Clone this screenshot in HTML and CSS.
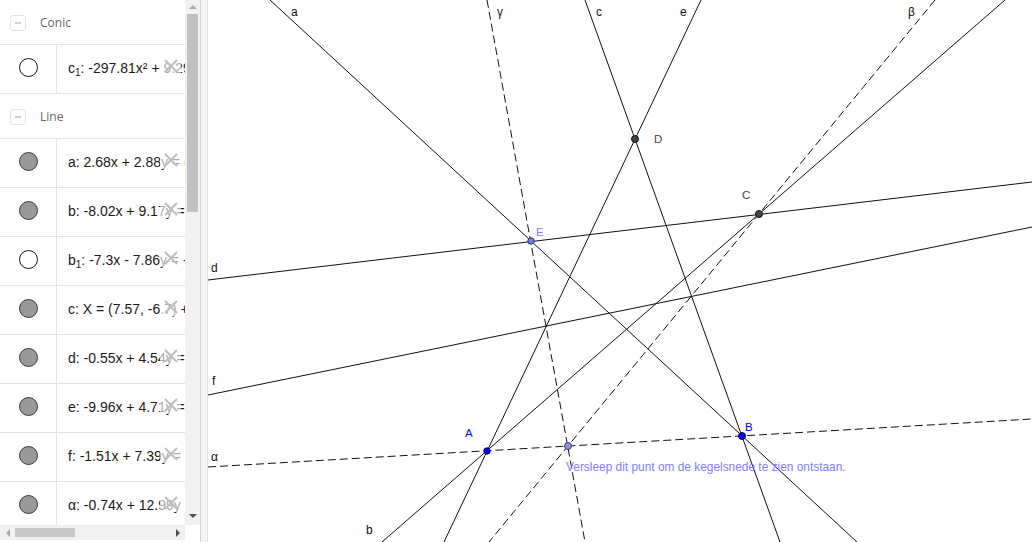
FILE: index.html
```html
<!DOCTYPE html>
<html>
<head>
<meta charset="utf-8">
<link rel="stylesheet" href="styles.css">
</head>
<body>
<div class="app">
  <div class="side">
    <div class="side-main">
      <div class="list">
        <div class="group">
          <div class="ghead"><span class="gtoggle"></span><span class="gname">Conic</span></div>
          <div class="item">
            <div class="mark"><span class="dot empty"></span></div>
            <div class="expr"><span class="txt">c<sub>1</sub>: -297.81x² + 9.29xy + 2.15y² = 1</span></div>
            <span class="del"><svg width="16" height="16" viewBox="0 0 16 16"><path d="M2 2 L14 14 M14 2 L2 14" /></svg></span>
          </div>
        </div>
        <div class="group">
          <div class="ghead"><span class="gtoggle"></span><span class="gname">Line</span></div>
          <div class="item">
            <div class="mark"><span class="dot"></span></div>
            <div class="expr"><span class="txt">a: 2.68x + 2.88y = (8.1)</span></div>
            <span class="del"><svg width="16" height="16" viewBox="0 0 16 16"><path d="M2 2 L14 14 M14 2 L2 14" /></svg></span>
          </div>
          <div class="item">
            <div class="mark"><span class="dot"></span></div>
            <div class="expr"><span class="txt">b: -8.02x + 9.17y = 12.4</span></div>
            <span class="del"><svg width="16" height="16" viewBox="0 0 16 16"><path d="M2 2 L14 14 M14 2 L2 14" /></svg></span>
          </div>
          <div class="item">
            <div class="mark"><span class="dot empty"></span></div>
            <div class="expr"><span class="txt">b<sub>1</sub>: -7.3x - 7.86y = -4.2</span></div>
            <span class="del"><svg width="16" height="16" viewBox="0 0 16 16"><path d="M2 2 L14 14 M14 2 L2 14" /></svg></span>
          </div>
          <div class="item">
            <div class="mark"><span class="dot"></span></div>
            <div class="expr"><span class="txt">c: X = (7.57, -6.7) + λ (1, 2)</span></div>
            <span class="del"><svg width="16" height="16" viewBox="0 0 16 16"><path d="M2 2 L14 14 M14 2 L2 14" /></svg></span>
          </div>
          <div class="item">
            <div class="mark"><span class="dot"></span></div>
            <div class="expr"><span class="txt">d: -0.55x + 4.54y = 3.2</span></div>
            <span class="del"><svg width="16" height="16" viewBox="0 0 16 16"><path d="M2 2 L14 14 M14 2 L2 14" /></svg></span>
          </div>
          <div class="item">
            <div class="mark"><span class="dot"></span></div>
            <div class="expr"><span class="txt">e: -9.96x + 4.71y = 5.8</span></div>
            <span class="del"><svg width="16" height="16" viewBox="0 0 16 16"><path d="M2 2 L14 14 M14 2 L2 14" /></svg></span>
          </div>
          <div class="item">
            <div class="mark"><span class="dot"></span></div>
            <div class="expr"><span class="txt">f: -1.51x + 7.39y = 2.6</span></div>
            <span class="del"><svg width="16" height="16" viewBox="0 0 16 16"><path d="M2 2 L14 14 M14 2 L2 14" /></svg></span>
          </div>
          <div class="item">
            <div class="mark"><span class="dot"></span></div>
            <div class="expr"><span class="txt">α: -0.74x + 12.99y = 1.5</span></div>
            <span class="del"><svg width="16" height="16" viewBox="0 0 16 16"><path d="M2 2 L14 14 M14 2 L2 14" /></svg></span>
          </div>
        </div>
      </div>
      <div class="vscroll">
        <div class="sb-btn"><span class="tri up"></span></div>
        <div class="vthumb"></div>
        <div class="sb-fill"></div>
        <div class="sb-btn"><span class="tri down"></span></div>
      </div>
    </div>
    <div class="hrow">
      <div class="hscroll">
        <div class="sb-hbtn"><span class="tri left"></span></div>
        <div class="hthumb"></div>
        <div class="sb-fill"></div>
        <div class="sb-hbtn"><span class="tri right"></span></div>
      </div>
      <div class="corner"></div>
    </div>
  </div>
  <div class="splitter"></div>
  <div class="canvas">
    <svg class="plot" width="824" height="542" viewBox="208 0 824 542">
      <g class="solid">
        <line x1="270" y1="0" x2="857" y2="542"/>
        <line x1="585" y1="0" x2="780" y2="542"/>
        <line x1="701" y1="0" x2="444" y2="542"/>
        <line x1="208" y1="280" x2="1032" y2="182"/>
        <line x1="208" y1="395" x2="1032" y2="227"/>
        <line x1="1005" y1="0" x2="382" y2="542"/>
      </g>
      <g class="dashed">
        <line x1="208" y1="467" x2="1032" y2="419"/>
        <line x1="935" y1="0" x2="489" y2="542"/>
        <line x1="487" y1="0" x2="585" y2="542"/>
      </g>
      <g class="lbl">
        <text x="291" y="16">a</text>
        <text x="497" y="16">γ</text>
        <text x="596" y="16">c</text>
        <text x="680" y="16">e</text>
        <text x="908" y="16">β</text>
        <text x="211" y="272">d</text>
        <text x="212" y="385">f</text>
        <text x="211" y="461">α</text>
        <text x="366" y="534">b</text>
      </g>
      <circle class="pt dark" cx="635" cy="139" r="3.5"/>
      <circle class="pt dark" cx="759" cy="214" r="3.5"/>
      <circle class="pt lav" cx="531" cy="241" r="3.2"/>
      <circle class="pt blue" cx="487" cy="451" r="3.2"/>
      <circle class="pt blue" cx="742" cy="436" r="3.5"/>
      <circle class="pt lav2" cx="568" cy="446" r="3.5"/>
      <text class="plbl dk" x="654" y="143">D</text>
      <text class="plbl dk" x="742" y="199">C</text>
      <text class="plbl lv" x="536" y="236">E</text>
      <text class="plbl bl" x="465" y="437">A</text>
      <text class="plbl bl" x="745" y="431">B</text>
      <text class="hint" x="566" y="471">Versleep dit punt om de kegelsnede te zien ontstaan.</text>
    </svg>
  </div>
</div>
</body>
</html>
```
FILE: styles.css
```css
* { box-sizing: border-box; }
html, body { margin: 0; padding: 0; background: #fff; }
body {
  width: 1032px;
  height: 542px;
  overflow: hidden;
  font-family: "Liberation Sans", Arial, sans-serif;
}
.app { display: flex; height: 542px; }

.side { width: 200px; display: flex; flex-direction: column; height: 542px; }
.side-main { display: flex; height: 525px; }
.list { width: 185px; overflow: hidden; }

.ghead {
  height: 44px;
  display: flex;
  align-items: center;
  padding-left: 10px;
  gap: 14px;
}
.gtoggle {
  width: 16px;
  height: 16px;
  border: 1px solid #e3e3e3;
  border-radius: 3px;
  position: relative;
  margin-top: 2px;
}
.gtoggle::after {
  content: "";
  position: absolute;
  left: 4px;
  right: 4px;
  top: 6px;
  height: 2px;
  background: #cfcfcf;
}
.gname {
  font-family: "Open Sans", sans-serif;
  font-size: 12px;
  color: #666;
  margin-top: 1px;
}

.item {
  position: relative;
  display: flex;
  height: 49px;
  border-top: 1px solid #e2e2e2;
}
.group .item:last-child { border-bottom: 1px solid #e2e2e2; height: 50px; }
.mark {
  width: 57px;
  border-right: 1px solid #e2e2e2;
  display: flex;
  align-items: center;
  justify-content: center;
  padding-bottom: 3px;
}
.dot {
  width: 19px;
  height: 19px;
  border-radius: 50%;
  background: #999;
  border: 1px solid #3a3a3a;
}
.dot.empty { background: #fff; border-color: #111; }
.expr {
  flex: 1;
  display: flex;
  align-items: center;
  padding-left: 11px;
  padding-bottom: 3px;
  overflow: hidden;
}
.txt {
  font-size: 14px;
  line-height: 18px;
  color: #1a1a1a;
  white-space: nowrap;
}
.txt sub { font-size: 10px; vertical-align: -3px; line-height: 0; }
.del {
  position: absolute;
  left: 160px;
  top: 12px;
  width: 21px;
  height: 18px;
  background: rgba(255, 255, 255, 0.62);
  display: flex;
  align-items: center;
  justify-content: center;
}
.del svg { display: block; }
.del path { stroke: #bdbdbd; stroke-width: 2; fill: none; }

.vscroll {
  width: 15px;
  background: #f1f1f1;
  display: flex;
  flex-direction: column;
}
.sb-btn {
  height: 14px;
  display: flex;
  align-items: center;
  justify-content: center;
}
.sb-btn:last-child { height: 18px; }
.vthumb { height: 198px; margin: 0 2px; background: #c1c1c1; }
.sb-fill { flex: 1; }

.tri { width: 0; height: 0; }
.tri.up { border-left: 4px solid transparent; border-right: 4px solid transparent; border-bottom: 4px solid #a8a8a8; }
.tri.down { border-left: 4px solid transparent; border-right: 4px solid transparent; border-top: 4px solid #505050; }
.tri.left { border-top: 4px solid transparent; border-bottom: 4px solid transparent; border-right: 4px solid #a8a8a8; }
.tri.right { border-top: 4px solid transparent; border-bottom: 4px solid transparent; border-left: 4px solid #505050; }

.hrow { display: flex; height: 15px; }
.hscroll { width: 185px; background: #f1f1f1; display: flex; }
.sb-hbtn {
  width: 15px;
  display: flex;
  align-items: center;
  justify-content: center;
}
.hthumb { width: 60px; margin: 3px 0; background: #c8c8c8; }
.corner { width: 15px; background: #fff; }

.splitter {
  width: 8px;
  height: 542px;
  background: #f5f5f5;
  border-left: 1px solid #d8d8d8;
  border-right: 1px solid #e4e4e4;
}

.canvas { flex: 1; height: 542px; overflow: hidden; }
.plot { display: block; }
.solid line { stroke: #111; stroke-width: 1; }
.dashed line { stroke: #111; stroke-width: 1; stroke-dasharray: 8 4; }
.lbl text { font-family: "Liberation Sans", Arial, sans-serif; font-size: 12px; fill: #111; }
.pt { stroke-width: 1; }
.pt.dark { fill: #444; stroke: #111; }
.pt.lav { fill: #7b7bff; stroke: #333; }
.pt.lav2 { fill: #8f8ff0; stroke: #444; }
.pt.blue { fill: #0000ff; stroke: #000060; }
.plbl { font-family: "Liberation Sans", Arial, sans-serif; font-size: 11.5px; }
.plbl.dk { fill: #444; }
.plbl.lv { fill: #7b7bff; }
.plbl.bl { fill: #0000ff; }
.hint { font-family: "Liberation Sans", Arial, sans-serif; font-size: 11.9px; fill: #8080ff; }
```
